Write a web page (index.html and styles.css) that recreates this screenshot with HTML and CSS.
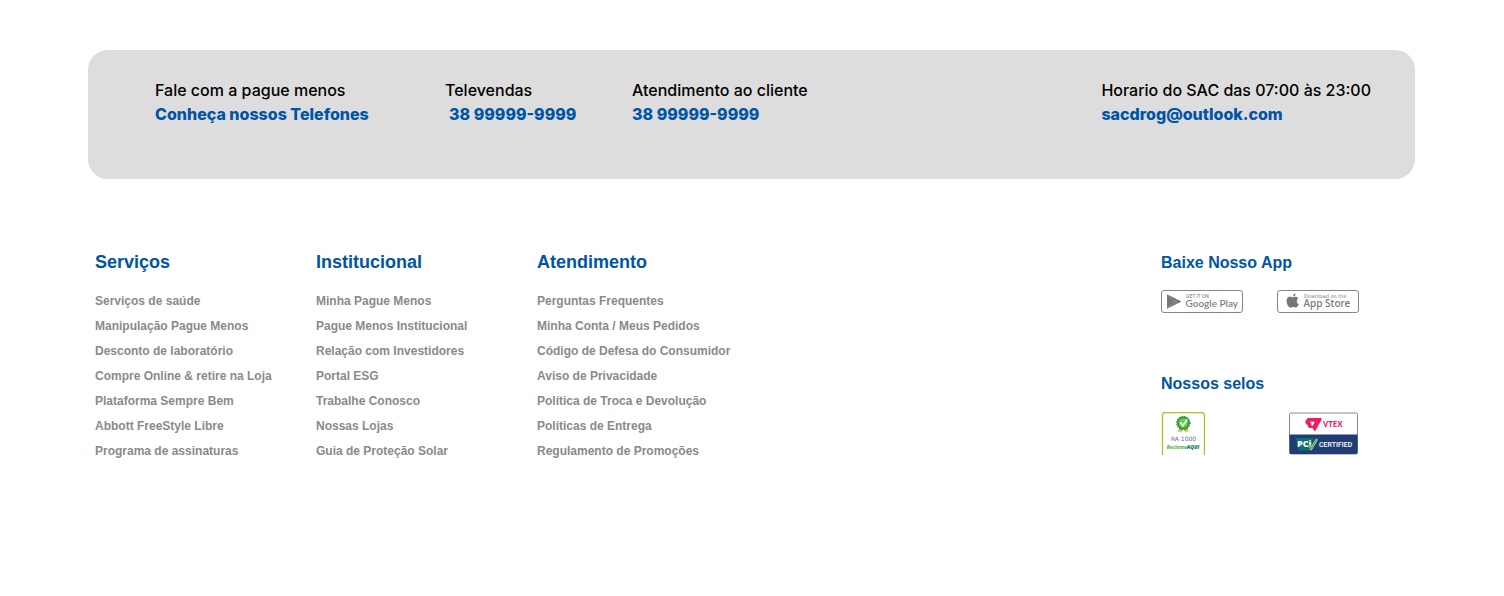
FILE: index.html
```html
<!DOCTYPE html>
<html lang="pt-BR">
<head>
<meta charset="utf-8">
<meta name="viewport" content="width=device-width, initial-scale=1">
<title>Pague Menos</title>
<link rel="stylesheet" href="styles.css">
</head>
<body>
<footer class="footer">
  <section class="contact">
    <div class="contact-item contact-phones">
      <p>Fale com a pague menos</p>
      <a href="#">Conheça nossos Telefones</a>
    </div>
    <div class="contact-item contact-sales">
      <p>Televendas</p>
      <a href="#">38 99999-9999</a>
    </div>
    <div class="contact-item">
      <p>Atendimento ao cliente</p>
      <a href="#">38 99999-9999</a>
    </div>
    <div class="contact-item contact-hours">
      <p>Horario do SAC das 07:00 às 23:00</p>
      <a href="#">sacdrog@outlook.com</a>
    </div>
  </section>

  <div class="directory">
    <nav class="links">
      <section>
        <h2>Serviços</h2>
        <ul>
          <li><a href="#">Serviços de saúde</a></li>
          <li><a href="#">Manipulação Pague Menos</a></li>
          <li><a href="#">Desconto de laboratório</a></li>
          <li><a href="#">Compre Online &amp; retire na Loja</a></li>
          <li><a href="#">Plataforma Sempre Bem</a></li>
          <li><a href="#">Abbott FreeStyle Libre</a></li>
          <li><a href="#">Programa de assinaturas</a></li>
        </ul>
      </section>
      <section>
        <h2>Institucional</h2>
        <ul>
          <li><a href="#">Minha Pague Menos</a></li>
          <li><a href="#">Pague Menos Institucional</a></li>
          <li><a href="#">Relação com Investidores</a></li>
          <li><a href="#">Portal ESG</a></li>
          <li><a href="#">Trabalhe Conosco</a></li>
          <li><a href="#">Nossas Lojas</a></li>
          <li><a href="#">Guia de Proteção Solar</a></li>
        </ul>
      </section>
      <section>
        <h2>Atendimento</h2>
        <ul>
          <li><a href="#">Perguntas Frequentes</a></li>
          <li><a href="#">Minha Conta / Meus Pedidos</a></li>
          <li><a href="#">Código de Defesa do Consumidor</a></li>
          <li><a href="#">Aviso de Privacidade</a></li>
          <li><a href="#">Política de Troca e Devolução</a></li>
          <li><a href="#">Políticas de Entrega</a></li>
          <li><a href="#">Regulamento de Promoções</a></li>
        </ul>
      </section>
    </nav>

    <aside class="extras">
      <section class="apps">
        <h3>Baixe Nosso App</h3>
        <div class="badges">
          <a class="badge" href="#">
            <svg width="82" height="23" viewBox="0 0 82 23">
              <rect class="badge-frame" x=".5" y=".5" width="81" height="22" rx="2.5"/>
              <path d="M6 4.200 20.500 11.500 6 18.800Z" fill="#777"/>
              <path d="M7 5 16.500 14M7 18 16.500 9" stroke="#aaa" stroke-width=".5"/>
              <text class="badge-small" x="25" y="8">GET IT ON</text>
              <text class="badge-name" x="24.500" y="17">Google Play</text>
            </svg>
          </a>
          <a class="badge" href="#">
            <svg width="82" height="23" viewBox="0 0 82 23">
              <rect class="badge-frame" x=".5" y=".5" width="81" height="22" rx="2.5"/>
              <path d="M16.300 7.400C14.800 7.400 14.400 6.800 12.900 6.800 10.800 6.800 9.600 8.400 9.600 10.900 9.600 13.800 11.500 17.500 13.400 17.500 14.500 17.500 14.800 16.900 16.200 16.900S17.900 17.500 18.900 17.500C20.100 17.500 21.100 15.900 21.700 14.200 19.300 13.100 19.300 9.700 21.200 8.500 20.400 7.200 19.400 6.800 18.400 6.800 17.600 6.800 17.100 7.400 16.300 7.400ZM16.100 6.600C15.900 4.800 17.200 3.800 18.500 3.500 18.800 5.200 17.500 6.500 16.100 6.600Z" fill="#777"/>
              <text class="badge-download" x="27" y="8">Download on the</text>
              <text class="badge-store" x="26.500" y="17">App Store</text>
            </svg>
          </a>
        </div>
      </section>

      <section class="seals-block">
        <h3>Nossos selos</h3>
        <div class="seals">
          <a href="#">
            <svg width="44" height="43" viewBox="0 0 44 43">
              <path d="M1.500 43V3.500Q1.500.5 4.500.5H40.500Q43.500.5 43.500 3.500V43" fill="#fff" stroke="#a3c51c" stroke-width="1.300"/>
              <path d="m18.500 15-1.800 5 2.200-.8 1.300 1.500 2-5.200ZM26 15l1.800 5-2.200-.8-1.300 1.500-2-5.200Z" fill="#f0ad3d"/>
              <circle cx="22.300" cy="11" r="6.400" fill="#219c46" stroke="#219c46" stroke-width="1.600" stroke-dasharray="1.500 1"/>
              <circle cx="22.300" cy="11" r="4.800" fill="#71c83e"/>
              <path d="m19.200 10.400 2.700 3.200 4.300-6" fill="none" stroke="#fff" stroke-width="1.700"/>
              <text class="ra-score" x="22.500" y="29" text-anchor="middle">RA 1000</text>
              <text class="ra-name" x="22" y="37" text-anchor="middle">Reclame<tspan class="ra-strong">AQUI</tspan></text>
            </svg>
          </a>
          <a href="#">
            <svg width="70" height="43" viewBox="0 0 70 43">
              <rect x=".5" y="1" width="68" height="41" rx="1.500" fill="#fff" stroke="#7889aa"/>
              <path d="M.5 22.500h68V40.500q0 1.500-1.500 1.500H2Q.5 42 .5 40.500Z" fill="#203c73"/>
              <path fill-rule="evenodd" d="M19.500 6H31.500q1.900 0 1 1.800L26.800 18.200q-1 1.600-2 0L23.600 16h-2.800q-1 0-1.500-1L18.200 12.500h-.7q-1.200-1.600-1.200-3.100 0-.8.900-1.200Q17.700 6 19.500 6ZM21.200 9.800q-.5 0-.2.500l1.900 3.500q.4.600.8 0l1.900-3.500q.2-.5-.3-.5Z" fill="#f71963"/>
              <text class="vtex" x="34" y="15">VTEX</text>
              <path d="M6 26h18.500l-3 12.500H9.500q2-7-3.500-12.500Z" fill="#0c706e"/>
              <text class="pci" x="8" y="35">PCi</text>
              <path d="m20 33 2.300 3.500L28 27" fill="none" stroke="#d9f2cf" stroke-width="2.400"/>
              <path d="m20 33 2.300 3.500L28 27" fill="none" stroke="#3fae49" stroke-width="1.400"/>
              <text class="certified" x="30" y="35">CERTIFIED</text>
            </svg>
          </a>
        </div>
      </section>
    </aside>
  </div>
</footer>
</body>
</html>
```
FILE: styles.css
```css
* { box-sizing: border-box; }

body {
  margin: 0;
  background: #fff;
  font-family: "Liberation Sans", Arial, sans-serif;
}

h2, h3, p, ul { margin: 0; padding: 0; }
ul { list-style: none; }
a { color: inherit; text-decoration: none; }
svg { display: block; }

.footer { padding: 50px 89px 50px 88px; }

.contact {
  display: flex;
  padding: 28px 44px 53px 67px;
  border-radius: 20px;
  background: #ddd;
  font-family: Inter, sans-serif;
  font-size: 16px;
  font-weight: 500;
  line-height: 24px;
  color: #000;
}

.contact-phones { width: 290px; }
.contact-sales { width: 187px; }
.contact-sales a { padding-left: 4px; }
.contact-hours { margin-left: auto; }
.contact-item a { color: #0054a6; font-weight: 800; }

.directory {
  display: flex;
  justify-content: space-between;
  padding: 72px 56px 0 7px;
}

.links {
  display: grid;
  grid-template-columns: repeat(3, 221px);
}

.links h2 {
  margin-bottom: 16px;
  color: #0054a6;
  font-size: 18px;
  line-height: 22px;
}

.links li {
  color: #8a8a8a;
  font-size: 12px;
  font-weight: 700;
  line-height: 25px;
}

.extras { width: 198px; }

.extras h3 {
  color: #0054a6;
  font-size: 16px;
  line-height: 24px;
}

.badges, .seals { display: flex; justify-content: space-between; }
.badges { margin-top: 15px; }
.seals-block { margin-top: 59px; }
.seals { margin-top: 16px; }

.badge-frame { fill: #fff; stroke: #858585; }
.badge text { fill: #777; }
.badge-small { font: 5px Roboto, sans-serif; }
.badge-name { font: 500 10px Lato, sans-serif; }
.badge-download { font: 5px "DejaVu Sans", sans-serif; }
.badge-store { font: 500 10px "Noto Sans", sans-serif; }

.ra-score { fill: #526bb0; font: 6px "DejaVu Sans", sans-serif; }
.ra-name { fill: #4cae38; font: italic 700 5px "Open Sans", sans-serif; }
.ra-strong { fill: #08783a; font-weight: 800; }
.vtex { fill: #f71963; font: 700 8px "Noto Sans", sans-serif; }
.pci { fill: #fff; font: 800 9px "Open Sans", sans-serif; }
.certified { fill: #fff; font: 500 7px Roboto, sans-serif; }
```
